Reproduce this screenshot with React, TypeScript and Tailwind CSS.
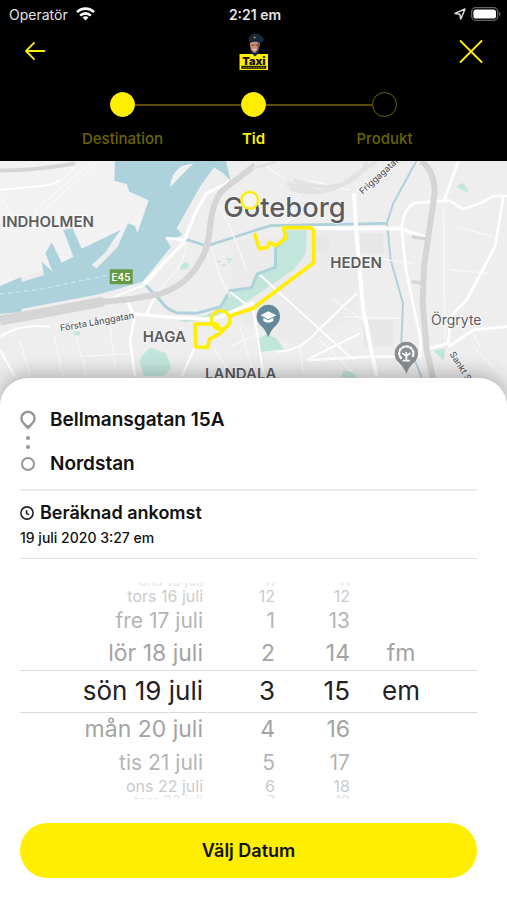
import clsx from "clsx";

const steps = [
  { label: "Destination", done: true, current: false },
  { label: "Tid", done: true, current: true },
  { label: "Produkt", done: false, current: false },
];

const wheels = [
  {
    name: "Dag",
    align: "text-right",
    items: ["ons 15 juli", "tors 16 juli", "fre 17 juli", "lör 18 juli", "sön 19 juli", "mån 20 juli", "tis 21 juli", "ons 22 juli", "tors 23 juli"],
  },
  { name: "Timme", align: "text-right", items: ["11", "12", "1", "2", "3", "4", "5", "6", "7"] },
  { name: "Minut", align: "text-right", items: ["11", "12", "13", "14", "15", "16", "17", "18", "19"] },
  { name: "Förmiddag eller eftermiddag", align: "text-center", items: ["", "", "", "fm", "em", "", "", "", ""] },
];

// Rows shrink and fade away from the selected one in the middle
const rowStyles = [
  "h-[5px] items-end overflow-hidden text-[14px] text-[#e4e4e4]",
  "h-4 items-center text-[16px] text-[#cbcbcb]",
  "h-8 items-center text-[21px] text-[#b4b4b4]",
  "h-[34px] items-center text-[23px] text-[#a3a3a3]",
  "h-[42px] items-center text-[26px] text-[#222]",
  "h-[34px] items-center text-[23px] text-[#a3a3a3]",
  "h-8 items-center text-[21px] text-[#b4b4b4]",
  "h-4 items-center text-[16px] text-[#cbcbcb]",
  "h-[5px] items-start overflow-hidden text-[14px] text-[#e4e4e4]",
];

function StatusBar() {
  return (
    <div className="grid h-7 grid-cols-3 items-center pl-[9px] pr-[6px] text-[14px] text-[#e5e5e5]">
      <div className="flex items-center gap-2">
        <span>Operatör</span>
        <svg className="h-[14px] w-[19px]" viewBox="0 0 19 14" fill="none" stroke="#fff" strokeWidth="2.6">
          <path d="M1 5.2 A12 12 0 0 1 18 5.2" />
          <path d="M4.2 8.6 A7.5 7.5 0 0 1 14.8 8.6" />
          <path d="M9.5 13.6 L6.6 10.6 A4 4 0 0 1 12.4 10.6 Z" fill="#fff" stroke="none" />
        </svg>
      </div>
      <span className="text-center font-semibold">2:21 em</span>
      <div className="flex items-center justify-end gap-[5px]">
        <svg className="h-3 w-3" viewBox="0 0 12 12" fill="none" stroke="#ddd" strokeWidth="1.5" strokeLinejoin="round">
          <path d="M11 1 L6.8 11 L5.8 6.2 L1 5.4 Z" />
        </svg>
        <svg className="h-[14px] w-[30px]" viewBox="0 0 30 14">
          <rect x="0.7" y="0.7" width="26" height="12.6" rx="4" fill="none" stroke="#666" strokeWidth="1.3" />
          <rect x="2.4" y="2.4" width="22.6" height="9.2" rx="2.6" fill="#fff" />
          <path d="M28.2 4.8 a2.4 2.4 0 0 1 0 4.4z" fill="#666" />
        </svg>
      </div>
    </div>
  );
}

function Logo() {
  return (
    <svg className="h-[38px] w-[30px]" viewBox="0 0 30 38" role="img" aria-label="Taxi">
      <path d="M11.5 15 h8 l1.5 7 h-10z" fill="#132238" />
      <path d="M11 8 q-.6 8 3 11 q1.6 1.4 3.4 0 q4-4 3.4-11z" fill="#c98f7c" />
      <path d="M18.5 9 q1 6-1.8 10.4 q4-3 4.2-10.4z" fill="#7d5148" />
      <path d="M12.6 12.2h2.2M16.4 12.2h2.2" stroke="#4b2f2b" strokeWidth="1" />
      <path d="M13.6 16.4 q2 1 4 0" stroke="#f3dcd4" strokeWidth="1" fill="none" />
      <path d="M9.6 5.4 Q11 1 15.4.6 Q21 .4 25 6 Q24.6 9 21.4 10 Q16 7.6 11 10 Q9.6 8 9.6 5.4z" fill="#17293f" />
      <circle cx="15.6" cy="4.6" r="1" fill="#b59b4a" />
      <rect x="0.5" y="21" width="28.5" height="16" fill="#ffee00" />
      <rect x="2.4" y="32.8" width="24.8" height="3" fill="#161400" />
      <path d="M4 34.4h21.5" stroke="#a89d00" strokeWidth="0.9" strokeDasharray="1.6 0.9" />
      <text x="14.8" y="31.8" textAnchor="middle" fontSize="11" fontWeight="900" fill="#111">Taxi</text>
      <path d="M13 20.6h6l-3 3z" fill="#132238" />
    </svg>
  );
}

function Header() {
  return (
    <header className="bg-black pb-3">
      <StatusBar />
      <div className="grid h-12 grid-cols-3 items-center px-6">
        <button type="button" aria-label="Tillbaka" className="justify-self-start">
          <svg className="h-[22px] w-[22px]" viewBox="0 0 22 22" fill="none" stroke="#ffee00" strokeWidth="1.8" strokeLinecap="round" strokeLinejoin="round">
            <path d="M20.5 10 H2 M10 1.8 L2 10 L10 18.2" />
          </svg>
        </button>
        <div className="justify-self-center">
          <Logo />
        </div>
        <button type="button" aria-label="Stäng" className="justify-self-end">
          <svg className="h-[24px] w-[24px]" viewBox="0 0 24 24" fill="none" stroke="#ffee00" strokeWidth="1.8" strokeLinecap="round">
            <path d="M1.5 1 L22.5 22 M22.5 1 L1.5 22" />
          </svg>
        </button>
      </div>
      <ol className="mt-4 grid grid-cols-3 px-[57px]">
        {steps.map((step, i) => (
          <li key={step.label} aria-current={step.current ? "step" : undefined}>
            <div className="flex items-center">
              <span className={clsx("h-[2px] flex-1", i > 0 && "bg-[#5c4d06]")} />
              <span
                className={clsx(
                  "size-[25px] rounded-full border",
                  step.done ? "border-[#ffee00] bg-[#ffee00]" : "border-[#6b6500]"
                )}
              />
              <span className={clsx("h-[2px] flex-1", i < steps.length - 1 && "bg-[#5c4d06]")} />
            </div>
            <p
              className={clsx(
                "mt-3 text-center text-[15px] leading-5",
                step.current ? "font-semibold text-[#ffee00]" : "font-medium text-[#6b6500]"
              )}
            >
              {step.label}
            </p>
          </li>
        ))}
      </ol>
    </header>
  );
}

function RouteMap() {
  return (
    <svg
      className="block h-[244px] w-full"
      viewBox="0 3 1521 732"
      preserveAspectRatio="xMidYMin slice"
      role="img"
      aria-label="Karta över Göteborg"
    >
      <rect width="1521" height="740" fill="#eeeeef" />
      <path d="M0 0H345V62L446 121L412 218L0 378z" fill="#f2f2f3" />
      <path d="M700 240L930 230L900 200H1070V470L900 560L690 470z" fill="#ebebec" />
      <path d="M940 230h50v44h-50zM1080 220h70v60h-70zM1090 480h90v80h-90z" fill="#e7e7e8" />

      {/* river and docks */}
      <path
        d="M345 0 L343 62 L380 72 L388 95 L446 121 L412 220 L405 198 L384 190 L352 262 L290 325 L275 315 L318 275 L330 255 L362 210 L245 266 L218 205 L190 210 L220 290 L185 308 L155 247 L136 280 L158 335 L125 305 L132 345 L66 366 L62 352 L0 378 V462 L62 456 L68 446 L300 402 L428 365 L512 262 L498 235 L530 232 L548 225 L530 205 L600 80 L642 22 L670 40 L692 62 L677 0z"
        fill="#aed2dc"
      />
      <path d="M510 82 Q512 40 545 18 L580 10 L540 50z" fill="#f2f2f3" />
      <path d="M0 402 L120 388 L325 345" fill="none" stroke="#d8eaee" strokeWidth="3" strokeDasharray="14 10" />

      {/* parks */}
      <g fill="#c3e6dc">
        <path d="M859 210H920L918 280L880 330L759 412L700 455L560 487L535 482L620 465L665 440L692 392L755 385L770 345L828 320L825 265L855 235z" />
        <path d="M424 590L450 562L498 580L514 625L490 648H432L420 610z" />
        <path d="M770 540L800 522L830 535L852 568L780 575z" />
        <path d="M540 315l18-10l10 8l-6 14l-20 2zM222 514h18v12h-18zM1368 80l20-12l20 30l-16-6zM1298 572l38-8l-4 38zM1022 650l10-18l30 4l8 20z" />
      </g>
      <path d="M648 308l14-6M680 296l12 2l-8 12M664 316l14-2" stroke="#c3e6dc" strokeWidth="5" fill="none" />

      {/* canals */}
      <g fill="none" stroke="#aed2dc" strokeLinejoin="round">
        <path d="M437 375L482 422Q500 450 530 458L590 460L662 440L690 392L755 383L772 342L826 322L827 265L860 228" strokeWidth="9" />
        <path d="M505 235L565 240L620 258L762 212L810 197L1158 190" strokeWidth="8" />
        <path d="M1249 3L1180 130L1161 187L1172 300L1209 430L1204 545L1240 590L1268 660" strokeWidth="6" />
      </g>

      {/* minor streets */}
      <g fill="none" stroke="#f8f8f8" strokeWidth="4">
        <path d="M0 110L40 170M170 75L225 20M100 155L270 10M120 160L290 10" />
        <path d="M640 110L690 200L740 330M560 250L545 310L470 400M635 260L660 350L690 410" />
        <path d="M60 540L90 650M160 520L190 650M230 530L260 650M330 500L345 620M240 590L390 580" />
        <path d="M800 20L860 60M900 100L860 190M920 60L1050 90M1090 290L1240 310M1000 420L1090 480M1030 470L1200 475" />
        <path d="M1330 140L1335 540M1370 200L1480 230M1350 330L1470 340M1400 480L1440 560M1420 560L1500 640" />
        <path d="M640 560L690 640M720 500L760 640M690 560L780 520M960 540L1060 640M900 560L910 640" />
      </g>

      {/* main streets */}
      <g fill="none" stroke="#fff" strokeLinejoin="round">
        <path d="M0 90L150 75L180 62M0 530Q60 490 150 500M0 570L45 650" strokeWidth="6" />
        <path d="M378 415L400 462L520 472L640 478L762 428" strokeWidth="10" />
        <path d="M405 465L390 540L405 650M440 462L470 400M585 560L545 650" strokeWidth="8" />
        <path d="M498 235L552 240M690 65L620 100L585 160L550 250L430 370" strokeWidth="9" />
        <path d="M780 345L1000 545L1060 600" strokeWidth="6" />
        <path d="M690 395L760 450L790 640M830 575Q900 575 950 515L1070 400M920 600L1080 520" strokeWidth="6" />
        <path d="M930 205H1200L1240 220L1275 232" strokeWidth="11" />
        <path d="M1062 100L1068 205L1090 450L1130 650" strokeWidth="12" />
        <path d="M1205 205L1218 330L1262 540L1262 590H1110L930 600" strokeWidth="8" />
        <path d="M1205 200Q1215 130 1255 128L1350 122L1390 148L1440 130L1480 108H1521M1375 5L1330 128" strokeWidth="8" />
        <path d="M1510 110L1485 260L1400 420L1350 470L1345 550L1290 565M1345 560L1420 510L1521 500" strokeWidth="8" />
        <path d="M300 428L440 372L500 300L552 252" strokeWidth="5" />
      </g>

      {/* motorways and railway */}
      <g fill="none" stroke="#d5d5d6" strokeLinejoin="round">
        <path d="M0 482L150 455L310 425" strokeWidth="30" />
        <path d="M285 428L400 416L480 402Q560 375 600 305Q625 265 630 200Q640 110 675 85L765 15" strokeWidth="18" />
        <path d="M0 32Q120 30 225 10" strokeWidth="11" />
        <path d="M1262 3Q1304 30 1304 100L1272 320L1268 430L1280 570L1300 660" strokeWidth="18" />
        <path d="M1235 230L1285 238M1235 365L1268 370" strokeWidth="10" />
      </g>
      <g fill="none" stroke="#e2e2e3">
        <path d="M880 60Q960 90 1020 75T1100 5M870 85Q980 120 1060 50L1130 5M860 70L960 95" strokeWidth="12" />
        <path d="M759 25L830 5" strokeWidth="9" />
      </g>

      {/* labels */}
      <g fill="#5c5c5f" stroke="#fff" strokeWidth="5" strokeOpacity="0.7" paintOrder="stroke" fontWeight="600">
        <text x="6" y="201" fontSize="45">INDHOLMEN</text>
        <text x="428" y="546" fontSize="45">HAGA</text>
        <text x="991" y="325" fontSize="45">HEDEN</text>
        <text x="615" y="656" fontSize="45">LANDALA</text>
        <text x="670" y="171" fontSize="82" fontWeight="500">Göteborg</text>
        <text x="1293" y="494" fontSize="42" fontWeight="400">Örgryte</text>
        <text x="182" y="514" fontSize="27" fontWeight="500" transform="rotate(-10 182 514)">Första Långgatan</text>
        <text x="1088" y="104" fontSize="27" fontWeight="500" transform="rotate(-42 1088 104)">Friggagatan</text>
        <text x="1348" y="582" fontSize="27" fontWeight="500" transform="rotate(58 1348 582)">Sankt S</text>
      </g>
      <rect x="329" y="328" width="69" height="45" rx="3" fill="#659b45" />
      <text x="363" y="362" textAnchor="middle" fontSize="30" fontWeight="600" fill="#fff">E45</text>

      {/* places */}
      <path d="M805 532Q798 510 780 494A35 35 0 1 1 830 494Q812 510 805 532z" fill="#64899a" />
      <path d="M782 466L805 454L829 466L805 478zM790 473V483Q805 493 820 483V473L805 481z" fill="#fff" />
      <path d="M1219 642Q1212 620 1194 605A35 35 0 1 1 1244 605Q1226 620 1219 642z" fill="#8b8e91" />
      <g fill="none" stroke="#fff" strokeWidth="5" strokeLinecap="round">
        <path d="M1219 578V602M1219 588L1208 580M1219 588L1230 580M1210 602H1228" />
        <path d="M1203 594Q1192 580 1203 566Q1219 552 1235 566Q1246 580 1235 594" strokeDasharray="5 7" strokeWidth="7" />
      </g>

      {/* route */}
      <g fill="none" stroke="#ffee00" strokeLinejoin="round" strokeLinecap="round">
        <path
          d="M765 224L778 267L802 262L810 248L827 257L857 235L851 203H932L941 212V308L759 445L690 468L688 492L660 520L628 538L622 563L588 561L585 492H650L662 510"
          strokeWidth="11"
        />
        <circle cx="662" cy="480" r="28" strokeWidth="9" />
        <circle cx="749" cy="121" r="25" strokeWidth="7" fill="#f4f4f2" />
      </g>
    </svg>
  );
}

function TripSummary() {
  return (
    <section>
      <ul className="border-b-2 border-[#ebebeb] pb-[13px] text-[19px] font-semibold leading-6 text-[#111]">
        <li className="flex items-center gap-[14px]">
          <svg className="h-[22px] w-4 shrink-0" viewBox="0 0 16 22" fill="none" stroke="#969696" strokeWidth="2.4">
            <path d="M8 18.8 L4 14.6 A6.6 6.6 0 1 1 12 14.6 Z" strokeLinejoin="round" />
            <path d="M4.6 15.4 Q8 16.4 11.4 15.4 L8 19z" fill="#969696" stroke="none" />
          </svg>
          Bellmansgatan 15A
        </li>
        <li aria-hidden="true" className="flex h-5 w-4 flex-col items-center justify-center gap-[5px]">
          <span className="size-1 rounded-full bg-[#969696]" />
          <span className="size-1 rounded-full bg-[#969696]" />
        </li>
        <li className="flex items-center gap-[14px]">
          <span className="flex w-4 justify-center">
            <span className="size-[14px] rounded-full border-2 border-[#969696]" />
          </span>
          Nordstan
        </li>
      </ul>
      <div className="border-b border-[#e0e0e0] py-[10px]">
        <h2 className="flex items-center gap-[6px] text-[18px] font-semibold leading-6 text-[#111]">
          <svg className="size-[14px]" viewBox="0 0 14 14" fill="none" stroke="#222" strokeWidth="1.6">
            <circle cx="7" cy="7" r="6.1" />
            <path d="M6.6 4.2V7.4L9 8.6" />
          </svg>
          Beräknad ankomst
        </h2>
        <p className="mt-[3px] text-[14px] font-medium leading-5 text-[#111]">19 juli 2020 3:27 em</p>
      </div>
    </section>
  );
}

function DatePicker() {
  return (
    <section
      aria-label="Datum och tid"
      className="mt-6 grid grid-cols-[183fr_72fr_75fr_102fr_25fr] bg-[linear-gradient(#dadada,#dadada),linear-gradient(#dadada,#dadada)] bg-[length:100%_1px] bg-[position:0_87px,0_129px] bg-no-repeat"
    >
      {wheels.map((wheel) => (
        <div key={wheel.name} role="listbox" aria-label={wheel.name}>
          {wheel.items.map((item, i) =>
            item ? (
              <button
                key={i}
                type="button"
                role="option"
                aria-selected={i === 4}
                className={clsx(
                  "flex w-full whitespace-nowrap leading-none",
                  wheel.align === "text-center" ? "justify-center" : "justify-end",
                  rowStyles[i]
                )}
              >
                {item}
              </button>
            ) : (
              <div key={i} className={rowStyles[i]} />
            )
          )}
        </div>
      ))}
    </section>
  );
}

export default function App() {
  return (
    <div className="min-h-screen bg-white font-['Inter','Liberation_Sans',sans-serif]">
      <Header />
      <RouteMap />
      <main className="relative -mt-[27px] rounded-t-[28px] bg-white pb-[22px] pl-5 pr-[30px] pt-[30px] shadow-[0_-4px_20px_rgba(0,0,0,0.28)]">
        <TripSummary />
        <DatePicker />
        <button
          type="button"
          className="mt-6 h-[55px] w-full rounded-full bg-[#ffee00] text-[18px] font-semibold text-[#111]"
        >
          Välj Datum
        </button>
      </main>
    </div>
  );
}
